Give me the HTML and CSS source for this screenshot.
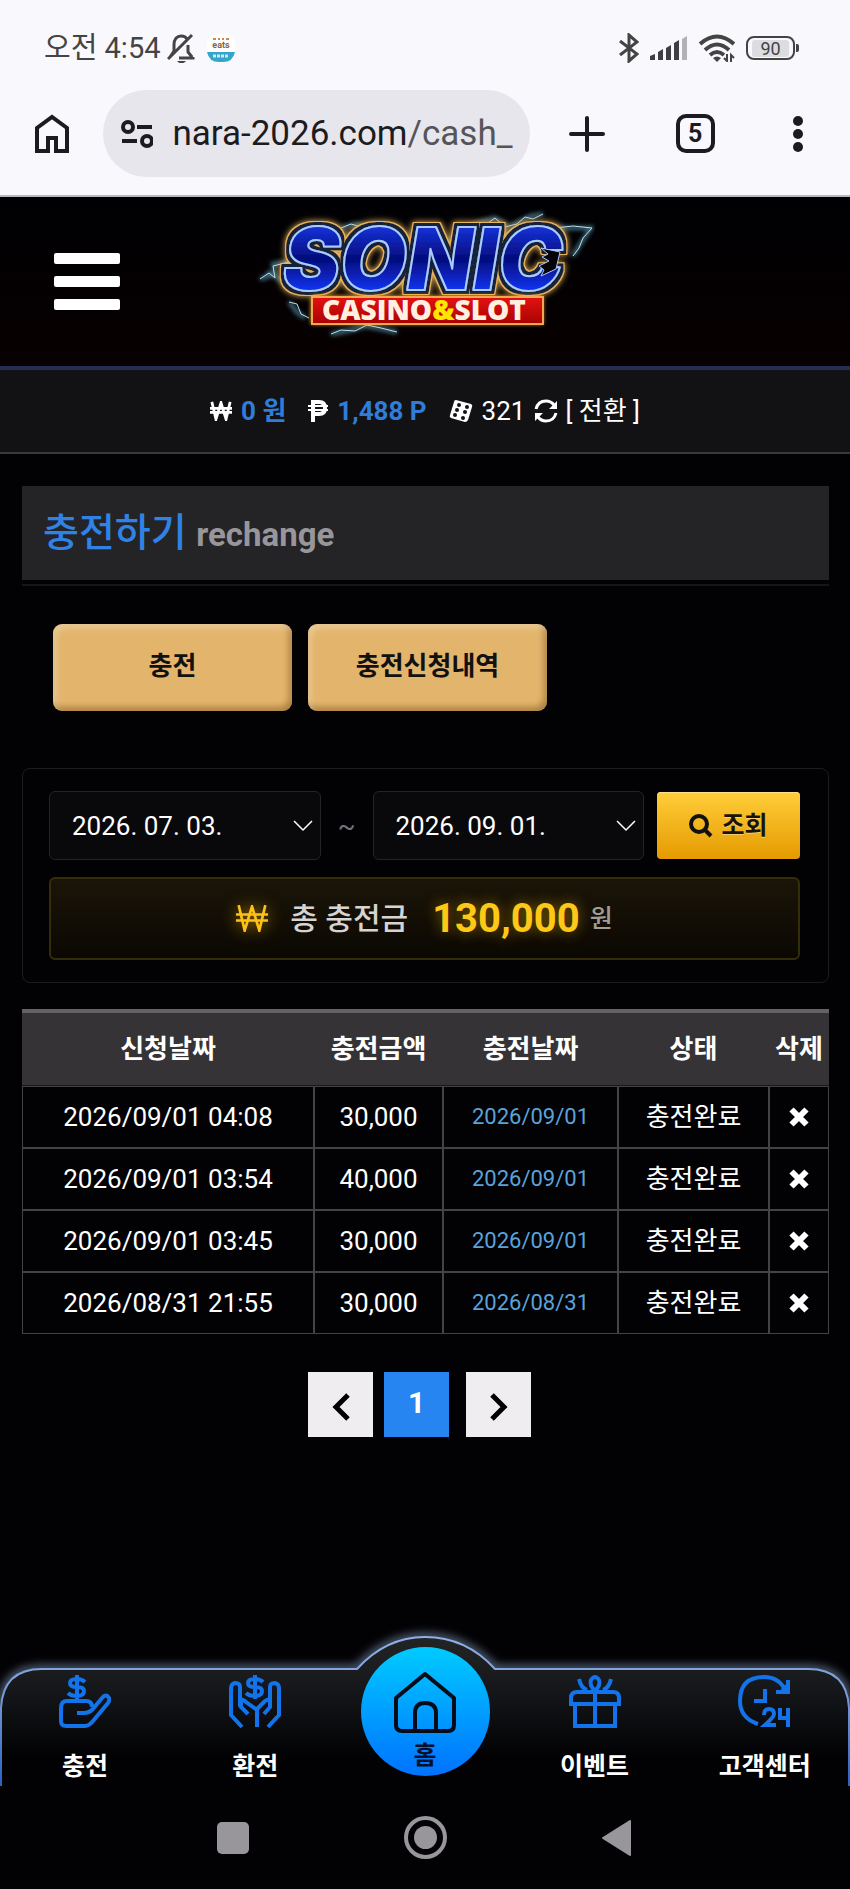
FILE: index.html
```
<!DOCTYPE html>
<html lang="ko">
<head>
    <meta charset="UTF-8">
    <meta name="viewport" content="width=device-width, initial-scale=1.0">
    <title>충전하기</title>
    <link rel="stylesheet" href="styles.css">
</head>
<body>
    <!-- icons used more than once -->
    <svg class="sprite" aria-hidden="true">
        <symbol id="icon-won" viewBox="0 0 24 20">
            <path d="M2 0 L6.500 19 L12 1 L17.500 19 L22 0 M0 7 H24 M0 11.500 H24" fill="none" stroke="currentColor"/>
        </symbol>
        <symbol id="icon-x" viewBox="0 0 20 20">
            <path d="M2.500 2.500 L17.500 17.500 M17.500 2.500 L2.500 17.500" fill="none" stroke="currentColor" stroke-width="6"/>
        </symbol>
        <symbol id="icon-down" viewBox="0 0 20 12">
            <path d="M1 1 L10 10 L19 1" fill="none" stroke="currentColor" stroke-width="1.500"/>
        </symbol>
    </svg>

    <div class="status-bar">
        <span class="clock">오전 4:54</span>
        <svg class="mute-icon" width="28" height="30" viewBox="0 0 28 30" fill="none" stroke="#444" stroke-width="3">
            <path d="M7 18 V12 C7 6 10 3 14 3 C17 3 19 4 20 6 M21 12 V19 L25 24 M12 25 H26 V24 M7 18 L3 24 M1 26 L25 2"/>
            <path d="M10 28 H19 C17 31 12 31 10 28Z" fill="#444" stroke="none"/>
        </svg>
        <svg class="eats-icon" width="28" height="28" viewBox="0 0 28 28">
            <rect width="28" height="28" rx="10" fill="#fff"/>
            <path d="M0 18 H28 Q26 28 16 28 H12 Q2 28 0 18Z" fill="#35a5cb"/>
            <path d="M6 5 H9 M11 5 H13 M15 5 H17 M19 5 H22" stroke="#c98a4d" stroke-width="2"/>
            <path d="M6 22 H22" stroke="#c8eef8" stroke-width="3" stroke-dasharray="3 1"/>
            <text x="14" y="14" text-anchor="middle" font-size="9" font-weight="700" fill="#8a6048">eats</text>
        </svg>
        <div class="status-icons">
            <svg width="20" height="30" viewBox="0 0 20 30" fill="none" stroke="#444" stroke-width="3">
                <path d="M1 8 L18 21 L10 28 V2 L18 9 L1 22"/>
            </svg>
            <svg width="38" height="26" viewBox="0 0 38 26" fill="#3f3e42">
                <path d="M0 25 V21 L5 19 V25Z M8 25 V17 L13 14 V25Z M16 25 V13 L21 10 V25Z M24 25 V8 L29 5 V25Z"/>
                <path d="M32 25 V4 L37 1 V25Z" fill="#b3b1b6"/>
            </svg>
            <svg width="36" height="28" viewBox="0 0 36 28" fill="none" stroke="#444" stroke-width="4">
                <path d="M1 10 Q18 -5 35 10"/>
                <path d="M6 16 Q18 5 30 16"/>
                <path d="M11 21 Q18 15 25 21"/>
                <path d="M14 24 Q18 21 22 24 L18 28Z" fill="#444" stroke="none"/>
                <path d="M28 20 V27 L25 24 M32 28 V21 L35 24" stroke-width="2"/>
            </svg>
            <span class="battery"><span>90</span></span>
        </div>
    </div>

    <div class="browser-bar">
        <button class="tool home" aria-label="홈페이지">
            <svg width="36" height="40" viewBox="0 0 36 40" fill="none" stroke="#1c1b20" stroke-width="4">
                <path d="M3 37 V14 L18 3 L33 14 V37 H22 V24 H14 V37Z"/>
            </svg>
        </button>
        <button class="address">
            <svg width="32" height="28" viewBox="0 0 32 28" fill="none" stroke="#1c1b20" stroke-width="4">
                <circle cx="7" cy="7" r="5"/>
                <circle cx="26" cy="21" r="5"/>
                <path d="M16 7 H31 M1 21 H16"/>
            </svg>
            <span>nara-2026.com<span class="path">/cash_</span></span>
        </button>
        <button class="tool add" aria-label="새 탭">
            <svg width="36" height="36" viewBox="0 0 36 36" stroke="#1c1b20" stroke-width="4" stroke-linecap="round">
                <path d="M18 2 V34 M2 18 H34"/>
            </svg>
        </button>
        <button class="tool tabs">5</button>
        <button class="tool more" aria-label="메뉴">
            <svg width="10" height="36" viewBox="0 0 10 36" fill="#1c1b20">
                <circle cx="5" cy="5" r="5"/><circle cx="5" cy="18" r="5"/><circle cx="5" cy="31" r="5"/>
            </svg>
        </button>
    </div>

    <header>
        <button class="menu-btn" aria-label="전체 메뉴"><i></i><i></i><i></i></button>
        <a href="#" class="logo">
            <svg width="340" height="136" viewBox="0 0 340 136">
                <defs>
                    <linearGradient id="logo-blue" x1="0" y1="0" x2="0" y2="1">
                        <stop offset=".1" stop-color="#1a3df2"/>
                        <stop offset=".5" stop-color="#040c7c"/>
                        <stop offset=".8" stop-color="#1034f0"/>
                    </linearGradient>
                    <linearGradient id="logo-red" x1="0" y1="0" x2="0" y2="1">
                        <stop offset="0" stop-color="#e51111"/>
                        <stop offset="1" stop-color="#a80303"/>
                    </linearGradient>
                    <filter id="logo-glow" x="-10%" y="-20%" width="120%" height="140%">
                        <feGaussianBlur stdDeviation="2"/>
                    </filter>
                    <!-- navy rim, gold rim and glow round the letters -->
                    <filter id="logo-rim" x="-10%" y="-20%" width="120%" height="140%">
                        <feMorphology in="SourceAlpha" operator="dilate" radius="3" result="inner"/>
                        <feMorphology in="SourceAlpha" operator="dilate" radius="4" result="outer"/>
                        <feFlood flood-color="#14233b"/>
                        <feComposite in2="inner" operator="in" result="navy"/>
                        <feFlood flood-color="#e8b45c"/>
                        <feComposite in2="outer" operator="in" result="gold"/>
                        <feGaussianBlur in="gold" stdDeviation="3" result="glow"/>
                        <feMerge>
                            <feMergeNode in="glow"/>
                            <feMergeNode in="gold"/>
                            <feMergeNode in="navy"/>
                            <feMergeNode in="SourceGraphic"/>
                        </feMerge>
                    </filter>
                </defs>
                <path d="M206 24 L226 16 L240 12 L252 21 L264 16 L276 10 L288 8 M86 22 L100 18 L116 22 M5 73 L20 68 L18 58 L34 56 M12 66 L30 76 M34 96 L42 106 L50 112 M76 128 L96 124 L110 120 L122 122 L142 126 M300 22 L336 22 L324 40 L318 50" fill="none" stroke="#5fa3bd" stroke-width="4" filter="url(#logo-glow)" opacity=".7"/>
                <path d="M206 24 L218 17 L230 19 L240 12 L250 21 L262 18 L270 11 L278 13 L288 8 M86 22 L96 18 L106 21 L116 22 M5 73 L14 67 L20 72 L18 60 L34 56 M34 96 L42 98 L46 108 L54 112 M76 128 L86 124 L100 125 L112 119 L126 122 L142 126 M300 22 L318 20 L337 22 L328 32 L324 42 L318 50" fill="none" stroke="#b9e2ee" stroke-width="1"/>
                <text class="logo-name" x="28" y="84" fill="url(#logo-blue)" stroke="#a9ccff" stroke-width="2" filter="url(#logo-rim)">SONIC</text>
                <path d="M305 46 L286 42 L293 48 L287 51 L294 55 L284 60 L289 64 L286 70 L301 63Z" fill="#050308" stroke="#a9ccff" stroke-width="1"/>
                <rect x="56" y="90" width="232" height="28" fill="#ffb12a" filter="url(#logo-glow)"/>
                <rect x="57" y="91" width="231" height="27" fill="url(#logo-red)" stroke="#f3a74e" stroke-width="2"/>
                <text class="logo-sub" x="169" y="114" text-anchor="middle" fill="#fff0e0">CASINO<tspan fill="#ffe600">&amp;</tspan>SLOT</text>
            </svg>
        </a>
    </header>

    <div class="my-info">
        <span class="cash"><svg class="won" width="22" height="20"><use href="#icon-won"/></svg>0 원</span>
        <span class="point">
            <svg width="20" height="22" viewBox="0 0 20 22" fill="none" stroke="#fff" stroke-width="4">
                <path d="M5 22 V2 H11 Q17 2 17 8 Q17 14 11 14 H5"/>
                <path d="M0 6 H20 M0 10 H20" stroke-width="2"/>
            </svg>1,488 P
        </span>
        <span class="dice">
            <svg width="24" height="24" viewBox="0 0 24 24">
                <path d="M7 1 L22 5 Q24 6 23 8 L19 21 Q18 23 16 23 L2 19 Q0 18 1 16 L5 3 Q5 1 7 1Z" fill="#fff"/>
                <g fill="#121114"><circle cx="10" cy="6" r="2"/><circle cx="18" cy="8" r="2"/><circle cx="8" cy="11" r="2"/><circle cx="16" cy="13" r="2"/><circle cx="6" cy="16" r="2"/><circle cx="14" cy="19" r="2"/></g>
            </svg>321
        </span>
        <button class="convert">
            <svg width="24" height="24" viewBox="0 0 24 24">
                <path d="M2 10 Q4 2 12 2 Q17 2 20 6 M22 14 Q20 22 12 22 Q7 22 4 18" fill="none" stroke="#fff" stroke-width="3"/>
                <path d="M23 2 V10 H15Z M1 22 V14 H9Z" fill="#fff"/>
            </svg>[ 전환 ]
        </button>
    </div>

    <main>
        <div class="page-title">
            <h1>충전하기 <small>rechange</small></h1>
        </div>

        <div class="btn-group">
            <button>충전</button>
            <button>충전신청내역</button>
        </div>

        <section class="search-box">
            <form class="search-row">
                <label class="date">
                    <select aria-label="시작일"><option>2026. 07. 03.</option></select>
                    <svg width="20" height="12"><use href="#icon-down"/></svg>
                </label>
                <span class="tilde">~</span>
                <label class="date">
                    <select aria-label="종료일"><option>2026. 09. 01.</option></select>
                    <svg width="20" height="12"><use href="#icon-down"/></svg>
                </label>
                <button type="button" class="search-btn">
                    <svg width="24" height="24" viewBox="0 0 24 24" fill="none" stroke="#111" stroke-width="4">
                        <circle cx="10" cy="10" r="8"/><path d="M16 16 L22 22"/>
                    </svg>조회
                </button>
            </form>
            <div class="total">
                <svg class="won" width="32" height="27"><use href="#icon-won"/></svg>
                <span class="total-label">총 충전금</span>
                <strong>130,000</strong>
                <span class="unit">원</span>
            </div>
        </section>

        <table>
            <colgroup>
                <col><col class="c-amt"><col class="c-date"><col class="c-state"><col class="c-del">
            </colgroup>
            <thead>
                <tr><th>신청날짜</th><th>충전금액</th><th>충전날짜</th><th>상태</th><th>삭제</th></tr>
            </thead>
            <tbody>
                <tr>
                    <td>2026/09/01 04:08</td><td>30,000</td><td class="done">2026/09/01</td><td>충전완료</td>
                    <td><button class="del" aria-label="삭제"><svg width="20" height="20"><use href="#icon-x"/></svg></button></td>
                </tr>
                <tr>
                    <td>2026/09/01 03:54</td><td>40,000</td><td class="done">2026/09/01</td><td>충전완료</td>
                    <td><button class="del" aria-label="삭제"><svg width="20" height="20"><use href="#icon-x"/></svg></button></td>
                </tr>
                <tr>
                    <td>2026/09/01 03:45</td><td>30,000</td><td class="done">2026/09/01</td><td>충전완료</td>
                    <td><button class="del" aria-label="삭제"><svg width="20" height="20"><use href="#icon-x"/></svg></button></td>
                </tr>
                <tr>
                    <td>2026/08/31 21:55</td><td>30,000</td><td class="done">2026/08/31</td><td>충전완료</td>
                    <td><button class="del" aria-label="삭제"><svg width="20" height="20"><use href="#icon-x"/></svg></button></td>
                </tr>
            </tbody>
        </table>

        <div class="pagination">
            <a href="#" aria-label="이전"><svg width="20" height="28" viewBox="0 0 20 28" fill="none" stroke="#000" stroke-width="5"><path d="M17 2 L5 14 L17 26"/></svg></a>
            <a href="#" class="active">1</a>
            <a href="#" class="next" aria-label="다음"><svg width="20" height="28" viewBox="0 0 20 28" fill="none" stroke="#000" stroke-width="5"><path d="M3 2 L15 14 L3 26"/></svg></a>
        </div>
    </main>

    <nav class="bottom-nav">
        <svg class="nav-bg" viewBox="0 0 850 170" preserveAspectRatio="none">
            <defs>
                <linearGradient id="nav-fill" x1="0" y1="0" x2="0" y2="1">
                    <stop offset="0" stop-color="#222426"/>
                    <stop offset=".35" stop-color="#15171a"/>
                    <stop offset=".8" stop-color="#020204"/>
                </linearGradient>
                <linearGradient id="nav-line" x1="0" y1="0" x2="0" y2="1">
                    <stop offset="0" stop-color="#8fb0e6"/>
                    <stop offset=".4" stop-color="#7799d4"/>
                    <stop offset="1" stop-color="#2a62c4"/>
                </linearGradient>
                <filter id="nav-glow" x="-5%" y="-20%" width="110%" height="140%">
                    <feGaussianBlur stdDeviation="5"/>
                </filter>
            </defs>
            <path d="M1 130 V92 Q3 53 42 53 H357 Q386 21 425 21 Q466 21 495 53 H808 Q847 53 849 92 V130" fill="none" stroke="#6f839f" stroke-width="6" filter="url(#nav-glow)"/>
            <path d="M1 170 V92 Q3 53 42 53 H357 Q386 21 425 21 Q466 21 495 53 H808 Q847 53 849 92 V170" fill="url(#nav-fill)" stroke="url(#nav-line)" stroke-width="2"/>
        </svg>
        <a href="#">
            <svg width="52" height="54" viewBox="0 0 52 54" fill="none" stroke="#1273ea" stroke-width="4">
                <path d="M26 7 Q23 4 18 4 Q11 4 11 8 Q11 12 18 12 Q25 12 25 16 Q25 21 18 21 Q12 21 9 18 M18 0 V26"/>
                <path d="M18 38 H25 Q30 38 34 34 L43 23 Q47 18 50 23 Q51 25 49 28 L34 46 Q30 51 26 51 H7 Q2 51 2 46 V33 Q2 26 8 26 H27 Q33 26 33 32"/>
            </svg>
            <span>충전</span>
        </a>
        <a href="#">
            <svg width="52" height="54" viewBox="0 0 52 54" fill="none" stroke="#1273ea" stroke-width="4">
                <path d="M34 7 Q31 4 26 4 Q19 4 19 8 Q19 12 26 12 Q33 12 33 16 Q33 21 26 21 Q20 21 17 18 M26 0 V24"/>
                <path d="M28 52 V35 L17 27 Q13 23 11 26 V12 Q11 8 6 8 Q2 9 2 13 V40 L13 52 M19 39 L12 32 V26 M28 34 L35 27 Q39 23 41 26 V12 Q41 8 46 8 Q50 9 50 13 V40 L39 52 M35 39 L41 32 V26"/>
            </svg>
            <span>환전</span>
        </a>
        <a href="#" class="nav-home">
            <svg width="62" height="62" viewBox="0 0 62 62" fill="none" stroke="#050c18" stroke-width="4" stroke-linejoin="round">
                <path d="M2 27 L31 3 L60 27 V54 Q60 60 54 60 H8 Q2 60 2 54Z M21 60 V42 Q21 32 31 32 Q42 32 42 42 V60"/>
            </svg>
            <span>홈</span>
        </a>
        <a href="#">
            <svg width="52" height="54" viewBox="0 0 52 54" fill="none" stroke="#1273ea" stroke-width="4">
                <path d="M2 29 V23 Q2 17 8 17 H44 Q50 17 50 23 V29Z M6 29 V51 H46 V29 M26 16 V51"/>
                <path d="M26 16 Q20 10 22 5 Q26 -1 30 5 Q32 10 26 16Z M10 4 Q12 13 18 15 M42 4 Q40 13 34 15"/>
            </svg>
            <span>이벤트</span>
        </a>
        <a href="#">
            <svg width="54" height="54" viewBox="0 0 54 54" fill="none" stroke="#1273ea" stroke-width="4">
                <path d="M20 49 Q2 43 2 26 Q2 2 26 2 Q42 2 48 17 M50 5 V17 H38 M27 14 V26 H16"/>
                <path d="M44 12 L50 8 V18 H42Z" fill="#1273ea" stroke="none"/>
                <path d="M26 40 Q26 34 31 34 Q36 34 36 39 Q36 42 27 50 H38 M42 33 V43 H50 M50 33 V52"/>
            </svg>
            <span>고객센터</span>
        </a>
    </nav>

    <div class="system-bar">
        <button aria-label="최근 앱"><i class="square"></i></button>
        <button aria-label="홈 화면"><i class="circle"></i></button>
        <button aria-label="뒤로">
            <svg width="30" height="38" viewBox="0 0 30 38" fill="#98969b" stroke="#98969b" stroke-width="2" stroke-linejoin="round">
                <path d="M28 2 V36 L1 19Z"/>
            </svg>
        </button>
    </div>
</body>
</html>
```
FILE: styles.css
```
* {
    margin: 0;
    padding: 0;
    box-sizing: border-box;
}

body {
    min-height: 100vh;
    display: flex;
    flex-direction: column;
    font-family: Roboto, "Noto Sans CJK KR", sans-serif;
    font-size: 26px;
    line-height: 32px;
    color: #fff;
    background-color: #020104;
}

button,
select {
    font: inherit;
    color: inherit;
    background: none;
    border: none;
    cursor: pointer;
}

a {
    color: inherit;
    text-decoration: none;
}

svg {
    display: block;
    flex-shrink: 0;
}

.sprite {
    position: absolute;
    width: 0;
    height: 0;
}

/* phone status bar */
.status-bar {
    display: flex;
    align-items: center;
    height: 90px;
    padding: 6px 50px 0 44px;
    color: #444;
    background-color: #f9f8fd;
}

.clock {
    font-size: 29px;
}

.mute-icon {
    margin-left: 7px;
}

.eats-icon {
    margin-left: 12px;
}

.status-icons {
    display: flex;
    align-items: center;
    gap: 11px;
    margin-left: auto;
}

.battery {
    position: relative;
    width: 49px;
    height: 24px;
    padding: 2px 4px;
    margin-right: 5px;
    border: 2px solid #444;
    border-radius: 8px;
}

.battery span {
    display: block;
    font-size: 18px;
    line-height: 17px;
    text-align: center;
    background: #dddce0;
    border-radius: 3px;
}

.battery::after {
    content: "";
    position: absolute;
    right: -6px;
    top: 6px;
    width: 3px;
    height: 8px;
    background: #444;
    border-radius: 0 2px 2px 0;
}

/* browser toolbar */
.browser-bar {
    display: flex;
    align-items: center;
    height: 107px;
    padding-bottom: 18px;
    background-color: #f9f8fd;
    border-bottom: 2px solid #b9b7bc;
}

.tool {
    display: flex;
    align-items: center;
    justify-content: center;
    width: 104px;
    height: 87px;
    color: #1c1b20;
}

.address {
    display: flex;
    flex: 1;
    align-items: center;
    gap: 19px;
    height: 87px;
    padding: 0 18px;
    font-size: 35px;
    line-height: 44px;
    white-space: nowrap;
    color: #1c1b20;
    background-color: #e7e6ec;
    border-radius: 44px;
}

.address .path {
    color: #55545a;
}

.add {
    width: 114px;
}

.tabs {
    width: 39px;
    height: 39px;
    margin: 0 32px;
    font-size: 25px;
    font-weight: 700;
    border: 4px solid #1c1b20;
    border-radius: 10px;
}

/* header */
header {
    display: grid;
    grid-template-columns: 1fr auto 1fr;
    align-items: center;
    height: 173px;
    padding: 0 54px;
    background: linear-gradient(#000004, #080001);
    border-bottom: 4px solid #252d55;
}

.menu-btn {
    display: flex;
    flex-direction: column;
    gap: 12px;
    width: 66px;
}

.menu-btn i {
    height: 11px;
    background: #fff;
    border-radius: 2px;
}

.logo {
    margin-bottom: 16px;
}

.logo-name {
    font-family: Inter, sans-serif;
    font-size: 86px;
    font-weight: 900;
    font-style: italic;
    stroke-linejoin: round;
}

.logo-sub {
    font-family: "Open Sans", sans-serif;
    font-size: 28px;
    font-weight: 800;
}

.my-info {
    display: flex;
    align-items: center;
    justify-content: center;
    height: 84px;
    background: #121114;
    border-bottom: 2px solid #3a393d;
}

.my-info > * {
    display: flex;
    align-items: center;
    gap: 9px;
}

.cash,
.point {
    margin-right: 22px;
    font-weight: 700;
    color: #2f7ddb;
}

.won {
    stroke-width: 3;
}

.my-info .won {
    color: #fff;
}

.dice {
    margin-right: 9px;
}

.my-info .convert {
    gap: 7px;
}

main {
    padding: 32px 21px 0 22px;
}

.page-title {
    margin-bottom: 38px;
    padding-bottom: 4px;
    border-bottom: 2px solid #161518;
}

.page-title h1 {
    padding: 22px 21px;
    font-size: 39px;
    font-weight: 500;
    line-height: 50px;
    color: #3083e6;
    background: #242326;
}

.page-title small {
    font-size: 33px;
    font-weight: 700;
    line-height: 32px;
    color: #98969a;
}

.btn-group {
    display: flex;
    gap: 16px;
    padding-left: 31px;
    margin-bottom: 57px;
}

.btn-group button {
    width: 239px;
    height: 87px;
    padding-bottom: 3px;
    font-weight: 700;
    color: #111;
    background: #e3b56c;
    border-radius: 9px;
    box-shadow: inset 3px 4px 6px rgba(255, 255, 255, 0.3), inset -3px -4px 6px rgba(90, 50, 0, 0.4);
}

/* search */
.search-box {
    padding: 22px 28px 22px 26px;
    margin-bottom: 26px;
    border: 1px solid #1d1c20;
    border-radius: 8px;
}

.search-row {
    display: flex;
    align-items: center;
    margin-bottom: 17px;
}

.date {
    position: relative;
    flex: 1;
}

.date select {
    display: block;
    width: 100%;
    height: 69px;
    padding: 0 22px;
    appearance: none;
    background: #09080b;
    border: 1px solid #242327;
    border-radius: 6px;
}

.date svg {
    position: absolute;
    right: 8px;
    top: 29px;
    pointer-events: none;
}

.tilde {
    width: 52px;
    text-align: center;
    color: #77757a;
}

.search-btn {
    display: flex;
    align-items: center;
    justify-content: center;
    gap: 8px;
    width: 143px;
    height: 67px;
    margin-left: 13px;
    font-size: 25px;
    font-weight: 700;
    color: #1a1408;
    background: linear-gradient(#ffce3a, #e59a00);
    border-radius: 4px;
    box-shadow: inset 0 1px 0 #ffe08a;
    text-shadow: 0 1px 0 rgba(255, 255, 255, 0.4);
}

.total {
    display: flex;
    align-items: center;
    justify-content: center;
    height: 83px;
    background: linear-gradient(#1b1508, #0b0803);
    border: 2px solid #332e08;
    border-radius: 6px;
}

.total .won {
    margin-right: 22px;
    color: #fdc216;
    stroke-width: 2;
    filter: drop-shadow(0 0 8px #a87800);
}

.total-label {
    margin-right: 24px;
    font-size: 30px;
    font-weight: 500;
    color: #d6d4d2;
}

.total strong {
    margin-right: 10px;
    font-size: 40px;
    color: #fdc816;
    text-shadow: 0 0 14px rgba(255, 190, 0, 0.5);
}

.unit {
    font-size: 25px;
    font-weight: 500;
    color: #a19d95;
}

/* history table */
table {
    width: 100%;
    table-layout: fixed;
    border-collapse: separate;
    border-spacing: 0;
    text-align: center;
}

.c-amt { width: 129px; }
.c-date { width: 175px; }
.c-state { width: 151px; }
.c-del { width: 60px; }

th {
    height: 77px;
    font-weight: 700;
    white-space: nowrap;
    background: #353336;
    border-top: 4px solid #646265;
    border-bottom: 1px solid #18171a;
}

td {
    height: 62px;
    border: 1px solid #444246;
}

td.done {
    font-size: 22px;
    color: #5aa3da;
}

.del {
    display: block;
    margin: 0 auto;
}

.pagination {
    display: flex;
    gap: 11px;
    padding: 38px 0 0 286px;
}

.pagination a {
    display: flex;
    align-items: center;
    justify-content: center;
    width: 65px;
    height: 65px;
    padding-top: 5px;
    background: #efedf0;
}

.pagination .active {
    padding: 0 0 4px;
    font-size: 30px;
    font-weight: 700;
    background: #2785f2;
}

.pagination .next {
    margin-left: 6px;
}

/* bottom menu */
.bottom-nav {
    position: relative;
    display: flex;
    height: 170px;
    margin-top: auto;
    padding-top: 59px;
}

.nav-bg {
    position: absolute;
    left: 0;
    top: 0;
    width: 100%;
    height: 100%;
    overflow: visible;
}

.bottom-nav a {
    position: relative;
    display: flex;
    flex: 1;
    flex-direction: column;
    align-items: center;
    gap: 22px;
    font-size: 25px;
    font-weight: 700;
}

.bottom-nav .nav-home {
    flex: none;
    width: 129px;
    height: 129px;
    margin: -28px 20px 0;
    padding-top: 24px;
    gap: 9px;
    line-height: 28px;
    color: #03102e;
    background: linear-gradient(#00cbff, #0072ff);
    border-radius: 50%;
}

.system-bar {
    display: flex;
    justify-content: center;
    gap: 130px;
    height: 103px;
}

.system-bar button {
    display: flex;
    align-items: center;
    justify-content: center;
    width: 62px;
}

.square {
    width: 32px;
    height: 32px;
    background: #98969b;
    border-radius: 5px;
}

.circle {
    width: 43px;
    height: 43px;
    background: #98969b;
    background-clip: content-box;
    padding: 6px;
    border: 4px solid #98969b;
    border-radius: 50%;
}
```
